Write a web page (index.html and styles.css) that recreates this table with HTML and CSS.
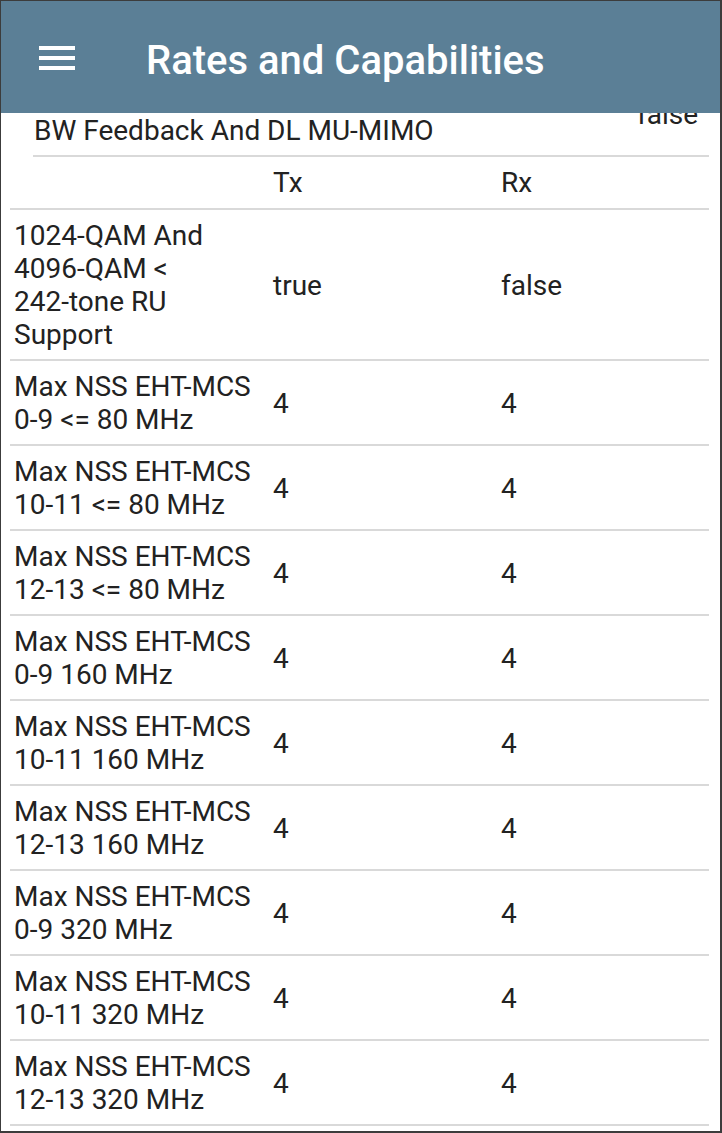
FILE: index.html
```html
<!DOCTYPE html>
<html lang="en">
<head>
<meta charset="utf-8">
<title>Rates and Capabilities</title>
<link rel="stylesheet" href="styles.css">
</head>
<body>
<div class="frame">
  <header class="appbar">
    <div class="menu" aria-label="Menu"><span></span><span></span><span></span></div>
    <h1 class="title">Rates and Capabilities</h1>
  </header>
  <main class="content">
    <div class="subtable">
      <div class="subrow">
        <div class="sublabel">Support For Triggered Beamforming Partial<br>BW Feedback And DL MU-MIMO</div>
        <div class="subvalue">false</div>
      </div>
    </div>
    <div class="table">
      <div class="row head">
        <div class="cell"></div>
        <div class="cell">Tx</div>
        <div class="cell">Rx</div>
      </div>
      <div class="row">
        <div class="cell">1024-QAM And 4096-QAM &lt; <span class="nobr">242-tone</span> RU Support</div>
        <div class="cell">true</div>
        <div class="cell">false</div>
      </div>
      <div class="row">
        <div class="cell">Max NSS EHT-MCS 0-9 &lt;= 80 MHz</div>
        <div class="cell">4</div>
        <div class="cell">4</div>
      </div>
      <div class="row">
        <div class="cell">Max NSS EHT-MCS 10-11 &lt;= 80 MHz</div>
        <div class="cell">4</div>
        <div class="cell">4</div>
      </div>
      <div class="row">
        <div class="cell">Max NSS EHT-MCS 12-13 &lt;= 80 MHz</div>
        <div class="cell">4</div>
        <div class="cell">4</div>
      </div>
      <div class="row">
        <div class="cell">Max NSS EHT-MCS 0-9 160 MHz</div>
        <div class="cell">4</div>
        <div class="cell">4</div>
      </div>
      <div class="row">
        <div class="cell">Max NSS EHT-MCS 10-11 160 MHz</div>
        <div class="cell">4</div>
        <div class="cell">4</div>
      </div>
      <div class="row">
        <div class="cell">Max NSS EHT-MCS 12-13 160 MHz</div>
        <div class="cell">4</div>
        <div class="cell">4</div>
      </div>
      <div class="row">
        <div class="cell">Max NSS EHT-MCS 0-9 320 MHz</div>
        <div class="cell">4</div>
        <div class="cell">4</div>
      </div>
      <div class="row">
        <div class="cell">Max NSS EHT-MCS 10-11 320 MHz</div>
        <div class="cell">4</div>
        <div class="cell">4</div>
      </div>
      <div class="row">
        <div class="cell">Max NSS EHT-MCS 12-13 320 MHz</div>
        <div class="cell">4</div>
        <div class="cell">4</div>
      </div>
    </div>
  </main>
</div>
</body>
</html>
```

FILE: styles.css
```css
html, body {
  margin: 0;
  padding: 0;
  background: #ffffff;
}

.frame {
  position: relative;
  box-sizing: border-box;
  width: 722px;
  height: 1133px;
  overflow: hidden;
  border-top: 1px solid #3c3c3c;
  border-left: 1px solid #3c3c3c;
  border-right: 2px solid #3c3c3c;
  border-bottom: 2px solid #3c3c3c;
  background: #ffffff;
  font-family: Roboto, "Liberation Sans", sans-serif;
  color: #222222;
}

.appbar {
  position: absolute;
  top: 0;
  left: 0;
  right: 0;
  height: 112px;
  background: #5b7f96;
  display: flex;
  align-items: center;
  z-index: 2;
}

.menu {
  margin-left: 38px;
  width: 36px;
  display: flex;
  flex-direction: column;
  gap: 6px;
  margin-top: 2px;
}

.menu span {
  display: block;
  height: 4px;
  background: #ffffff;
}

.title {
  margin: 6px 0 0 71px;
  font-size: 40px;
  font-weight: 500;
  color: #ffffff;
  letter-spacing: 0;
}

.content {
  padding-top: 71px;
}

.subtable {
  padding-left: 32px;
  padding-right: 11px;
}

.subrow {
  display: flex;
  align-items: center;
  border-bottom: 2px solid #d9d9d9;
  padding: 9px 0 8px 0;
  font-size: 28px;
  line-height: 33px;
}

.sublabel {
  flex: 1;
  padding-left: 1px;
}

.subvalue {
  width: 72px;
}

.table {
  padding-left: 9px;
  padding-right: 11px;
}

.row {
  display: grid;
  grid-template-columns: 259px 228px 1fr;
  align-items: center;
  border-bottom: 2px solid #d9d9d9;
  padding: 9px 0 8px 0;
  font-size: 28px;
  line-height: 33px;
}

.row.head {
  padding: 9px 0 9px 0;
}

.cell {
  padding-left: 4px;
  padding-right: 4px;
}

.nobr {
  white-space: nowrap;
}
```
